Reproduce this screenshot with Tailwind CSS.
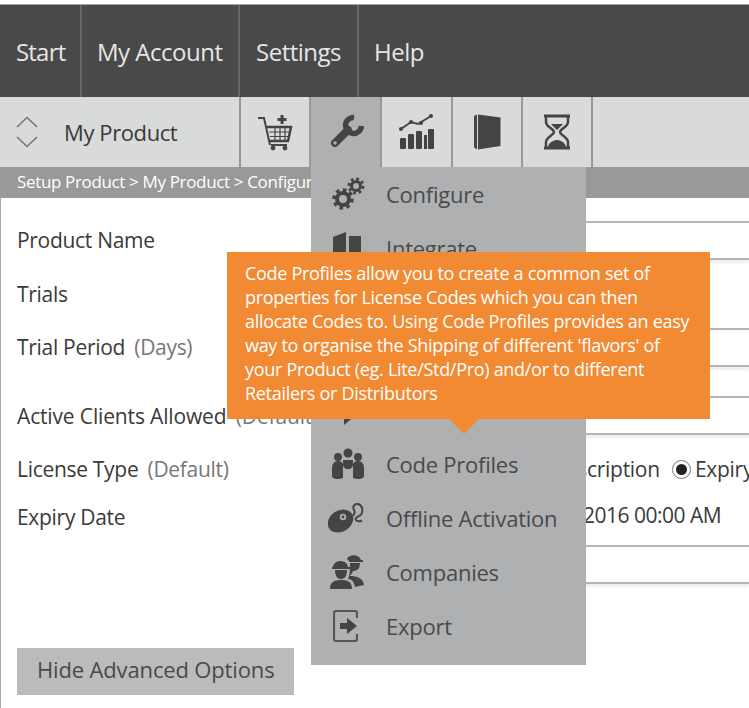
<!DOCTYPE html>
<html lang="en">
<head>
  <meta charset="UTF-8" />
  <title>My Product</title>
  <script src="https://cdn.jsdelivr.net/npm/@tailwindcss/browser@4"></script>
</head>
<body class="bg-white font-['Open_Sans',sans-serif] text-[#3a3a3a]">
<div class="relative h-[708px] w-[749px] overflow-hidden pt-1">

  <!-- top nav -->
  <nav class="flex h-[93px] border-t border-[#a5a5a5] bg-[#494949] text-[24px] tracking-[-0.5px] text-[#e6e6e6]">
    <a class="flex w-[82px] items-center border-r-2 border-[#666] pl-4 pt-[2px] tracking-[-0.8px]">Start</a>
    <a class="flex w-[158px] items-center border-r-2 border-[#666] pl-[15px] pt-[2px]">My Account</a>
    <a class="flex w-[119px] items-center border-r-2 border-[#666] pl-4 pt-[2px]">Settings</a>
    <a class="flex items-center pl-[15px] pt-[2px]">Help</a>
  </nav>

  <!-- product toolbar -->
  <div class="flex h-[70px] bg-[#d9dbda]">
    <div class="flex w-[241px] items-center border-r-2 border-[#999] pl-4">
      <svg width="22" height="32" viewBox="0 0 22 32" fill="none" stroke="#777" stroke-width="1.6"><path d="M1 11 L11 1.500 L21 11"/><path d="M1 21 L11 30.500 L21 21"/></svg>
      <span class="ml-[26px] text-[22px] tracking-[-0.4px]">My Product</span>
    </div>
    <div class="flex w-[70px] items-center justify-center border-r-2 border-[#999]">
      <svg width="36" height="38" viewBox="0 0 36 38" fill="#444" stroke="#444">
        <path d="M1 5 H7 L13 32" fill="none" stroke-width="2"/>
        <path d="M10 14 H34 L31 28 H13" fill="none" stroke-width="2.500"/>
        <path d="M12 19 H33 M13 23.500 H32 M18 14 V28 M23 14 V28 M28 14 V28" fill="none" stroke-width="1.200"/>
        <path d="M14 32 H30" fill="none" stroke-width="2"/>
        <circle cx="16" cy="35" r="2"/><circle cx="28" cy="35" r="2"/>
        <path d="M25 2 V11 M20.500 6.500 H29.500" fill="none" stroke-width="3"/>
      </svg>
    </div>
    <div class="flex w-[71px] items-center justify-center border-r-2 border-[#999] bg-[#afb0b2]">
      <svg width="36" height="36" viewBox="0 0 36 36" fill="none" stroke="#444">
        <path d="M7 29 L20 16" stroke-width="8" stroke-linecap="round"/>
        <path d="M26 3.500 A8 8 0 1 0 33.500 12" stroke-width="5.500"/>
        <circle cx="7" cy="29" r="1.800" fill="#afb0b2" stroke="none"/>
      </svg>
    </div>
    <div class="flex w-[71px] items-center justify-center border-r-2 border-[#999]">
      <svg width="36" height="36" viewBox="0 0 36 36" fill="#444">
        <rect x="1" y="24" width="6" height="11" rx="1"/><rect x="9" y="20" width="6" height="15" rx="1"/><rect x="17" y="17" width="6" height="18" rx="1"/><rect x="25" y="21" width="3" height="14"/><rect x="29" y="15" width="6" height="20" rx="1"/>
        <path d="M2 15 L12 8 L19 10 L32 2" fill="none" stroke="#444" stroke-width="2"/>
        <circle cx="2" cy="15" r="2"/><circle cx="12" cy="8" r="2"/><circle cx="22" cy="9" r="2"/><circle cx="32" cy="2" r="2"/>
      </svg>
    </div>
    <div class="flex w-[70px] items-center justify-center border-r-2 border-[#999]">
      <svg width="28" height="36" viewBox="0 0 28 36" fill="#444">
        <path d="M1 2 L4 0.500 V35.500 L1 33.500 Z"/><path d="M5 0.500 L27.500 3.500 V32 L5 35.500 Z"/>
      </svg>
    </div>
    <div class="flex w-[70px] items-center justify-center border-r-2 border-[#999]">
      <svg width="28" height="36" viewBox="0 0 28 36" fill="none" stroke="#444">
        <path d="M1 2 H27 M1 34 H27" stroke-width="3"/>
        <path d="M3 3 V8 C3 13 11 15 11 18 C11 21 3 23 3 28 V33 M25 3 V8 C25 13 17 15 17 18 C17 21 25 23 25 28 V33" stroke-width="2.500"/>
        <path d="M5 33 C6 28 11 26 14 26 C17 26 22 28 23 33 Z M8 10 H20 L14 16 Z" fill="#444" stroke="none"/>
      </svg>
    </div>
  </div>

  <div class="h-[31px] overflow-hidden whitespace-nowrap bg-[#999] pl-[17px] text-[17px] leading-[30px] tracking-[-0.35px] text-white">Setup Product &gt; My Product &gt; Configure</div>

  <!-- form -->
  <div class="flex h-[510px] border-l border-[#aaa]">
    <div class="w-[310px] shrink-0 pl-4 pt-[30px] text-[21px] leading-6 tracking-[-0.3px]">
      <div>Product Name</div>
      <div class="mt-[30px]">Trials</div>
      <div class="mt-[29px]">Trial Period <span class="ml-1 text-[#777]">(Days)</span></div>
      <div class="mt-[45px] whitespace-nowrap tracking-[-0.15px]">Active Clients Allowed <span class="ml-1 text-[#777]">(Default)</span></div>
      <div class="mt-[29px]">License Type <span class="ml-1 text-[#777]">(Default)</span></div>
      <div class="mt-[24px]">Expiry Date</div>
      <button class="mt-[119px] h-[47px] w-[277px] bg-[#bbb] pb-[5px] pl-5 text-left text-[22px] tracking-[-0.15px] text-[#4a4a4a]">Hide Advanced Options</button>
    </div>
    <div class="flex-1 overflow-hidden text-[21px] tracking-[-0.3px]">
      <div class="h-[25px] border-b-2 border-[#b5b5b5]"></div>
      <div class="h-[37px] border-b-2 border-[#b5b5b5] shadow-[0_3px_2px_#eee]"></div>
      <div class="h-[70px] border-b-2 border-[#b5b5b5]"></div>
      <div class="h-[37px] border-b-2 border-[#b5b5b5] shadow-[0_3px_2px_#eee]"></div>
      <div class="h-[31px] border-b-2 border-[#b5b5b5]"></div>
      <div class="h-[37px] border-b-2 border-[#b5b5b5] shadow-[0_3px_2px_#eee]"></div>
      <div class="h-[112px] border-b-2 border-[#b5b5b5]">
        <div class="flex items-center whitespace-nowrap pl-[230px] pt-[22px] leading-6">
          <span class="w-[131px] shrink-0">Subscription</span>
          <span class="flex size-[19px] shrink-0 items-center justify-center rounded-full border border-[#777] bg-white"><span class="size-[11px] rounded-full bg-[#222]"></span></span>
          <span class="ml-1 shrink-0">Expiry</span>
        </div>
        <div class="pl-[272px] pt-[22px] leading-6 tracking-[-0.5px]">2016 00:00 AM</div>
      </div>
      <div class="h-[37px] border-b-2 border-[#b5b5b5] shadow-[0_3px_2px_#eee]"></div>
    </div>
  </div>

  <!-- dropdown under the wrench tab -->
  <div class="absolute left-[311px] top-[167px] w-[275px] bg-[#afb0b2] pb-3 text-[22px] tracking-[-0.25px] text-[#4a4a4a]">
    <div class="flex h-[54px] items-center">
      <svg class="ml-5 w-[34px] shrink-0" width="34" height="34" viewBox="0 0 34 34" fill="none" stroke="#444">
        <circle cx="12" cy="22" r="6" stroke-width="4"/><circle cx="12" cy="22" r="9" stroke-width="3.500" stroke-dasharray="3.500 3.500"/>
        <circle cx="25" cy="9" r="4.500" stroke-width="3"/><circle cx="25" cy="9" r="7" stroke-width="3" stroke-dasharray="2.750 2.750"/>
      </svg>
      <span class="ml-[21px]">Configure</span>
    </div>
    <div class="flex h-[54px] items-center">
      <svg class="ml-5 w-[34px] shrink-0" width="34" height="34" viewBox="0 0 34 34" fill="#444">
        <path d="M2 6 L15 1 V33 H2 Z"/><path d="M18 5 H30 V33 H18 Z"/>
      </svg>
      <span class="ml-[21px]">Integrate</span>
    </div>
    <div class="h-[54px]"></div>
    <div class="h-[54px]"></div>
    <div class="flex h-[54px] items-center">
      <svg class="ml-5 w-[34px] shrink-0" width="34" height="34" viewBox="0 0 34 34" fill="#444"><path d="M13 14 L25 22 L13 32 Z"/></svg>
    </div>
    <div class="flex h-[54px] items-center">
      <svg class="ml-5 w-[34px] shrink-0" width="34" height="34" viewBox="0 0 34 34" fill="#444">
        <circle cx="17" cy="6" r="4.500"/><circle cx="7" cy="10" r="4"/><circle cx="27" cy="10" r="4"/>
        <path d="M1 22 C1 15 4 14 8 14 C10 14 11 15 12 17 L12 31 C7 33 1 32 1 29 Z"/>
        <path d="M33 22 C33 15 30 14 26 14 C24 14 23 15 22 17 L22 31 C27 33 33 32 33 29 Z"/>
        <path d="M12 13 H22 V18 C22 20 20 21 19 22 H15 C14 21 12 20 12 18 Z"/>
      </svg>
      <span class="ml-[21px]">Code Profiles</span>
    </div>
    <div class="flex h-[54px] items-center">
      <svg class="ml-[17px] mr-[2px] w-[36px] shrink-0" width="36" height="30" viewBox="0 0 36 30" fill="#444">
        <ellipse cx="12.500" cy="18" rx="13.500" ry="10.500" transform="rotate(-32 12.500 18)"/>
        <circle cx="15" cy="14" r="3.200" fill="#afb0b2"/>
        <circle cx="15" cy="14" r="1.400"/>
        <path d="M21 12 C24 15 28 11 26 7 C24 3 27 0.500 30 1 C34 2 35.500 7 33.500 11 C32 14 28 13 27.500 16 C27.500 18 31 19 34 17.500" fill="none" stroke="#444" stroke-width="2"/>
      </svg>
      <span class="ml-[20px]">Offline Activation</span>
    </div>
    <div class="flex h-[54px] items-center">
      <svg class="ml-[18px] mr-[1px] w-[36px] shrink-0" width="36" height="36" viewBox="0 0 36 36" fill="#444">
        <path d="M4 13 C5 5 18 5 19 13 H21 V15 H3 V13 Z"/>
        <path d="M6 16 H18 C18 23 15 25 12 25 C9 25 6 23 6 16 Z"/>
        <path d="M1 35 C1 28 5 26 12 26 C19 26 23 28 23 35 Z"/>
        <path d="M18 5 C20 0 30 0 32 6 H34 V8 H20 V7 Z"/>
        <path d="M21 9 H31 C31 15 28 17 24 17 C23 20 22 20 21 22 C28 22 34 24 35 31 L26 33 C25 28 23 25 19 25 C21 22 21 15 21 9 Z"/>
      </svg>
      <span class="ml-[20px]">Companies</span>
    </div>
    <div class="flex h-[54px] items-center">
      <svg class="ml-[22px] mr-[7px] w-[25px] shrink-0" width="25" height="32" viewBox="0 0 25 32" fill="none" stroke="#555" stroke-width="2.200">
        <path d="M24 8 V3 Q24 1 22 1 H3 Q1 1 1 3 V29 Q1 31 3 31 H22 Q24 31 24 29 V24"/>
        <path d="M7 13 H14 V8 L24 16 L14 24 V19 H7 Z" fill="#444" stroke="none"/>
      </svg>
      <span class="ml-[21px]">Export</span>
    </div>
  </div>

  <!-- orange tooltip -->
  <div class="absolute left-[227px] top-[252px] h-[167px] w-[483px] bg-[#f28a33] pl-[18px] pt-[9px] text-[18px] leading-6 tracking-[-0.3px] text-white">
    <p class="whitespace-nowrap">Code Profiles allow you to create a common set of<br>properties for License Codes which you can then<br>allocate Codes to. Using Code Profiles provides an easy<br>way to organise the Shipping of different 'flavors' of<br>your Product (eg. Lite/Std/Pro) and/or to different<br>Retailers or Distributors</p>
    <div class="absolute left-[222px] top-full size-0 border-x-[15px] border-t-[15px] border-x-transparent border-t-[#f28a33]"></div>
  </div>

</div>
</body>
</html>
